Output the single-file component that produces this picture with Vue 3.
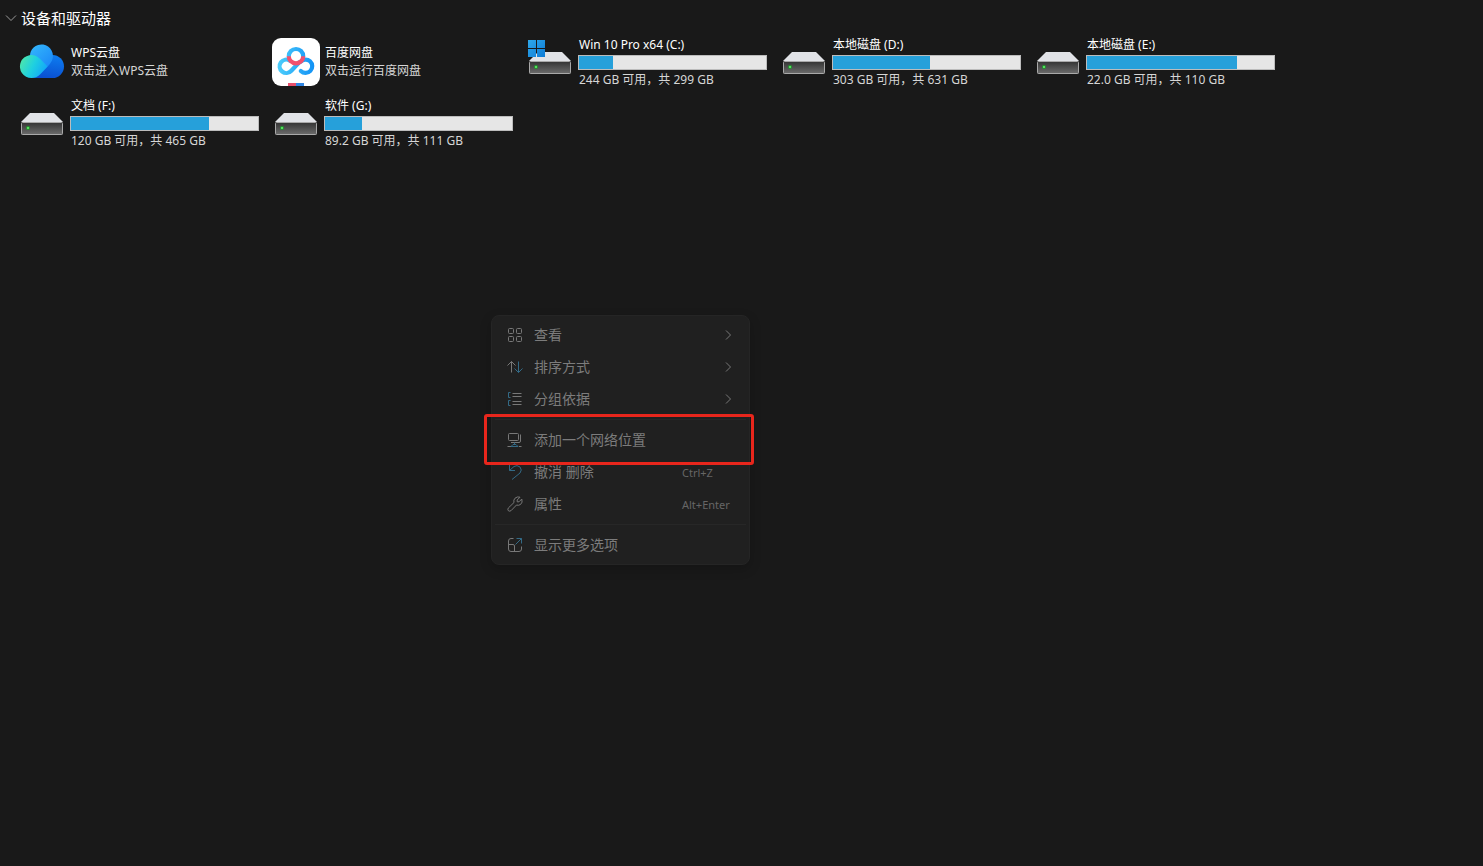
<template>
    <main class="explorer">
        <button class="group-title" type="button" :aria-expanded="expanded" @click="expanded = !expanded">
            <svg class="group-arrow" :class="{ closed: !expanded }" width="12" height="12" viewBox="0 0 12 12">
                <path d="M1 3.5 L6 8.5 L11 3.5" />
            </svg>
            <span>设备和驱动器</span>
        </button>
        <ul class="tiles" v-show="expanded">
            <li class="tile" v-for="item in items" :key="item.name">
                <svg v-if="item.type === 'wps'" class="tile-icon" viewBox="0 0 48 48">
                    <defs>
                        <linearGradient id="wpsTop" x1="0" y1="0" x2="1" y2="1">
                            <stop offset="0" stop-color="#35b9fb" />
                            <stop offset="1" stop-color="#1a86f8" />
                        </linearGradient>
                        <linearGradient id="wpsRight" x1="0.6" y1="0" x2="0.4" y2="1">
                            <stop offset="0" stop-color="#0d7cf0" />
                            <stop offset="1" stop-color="#0a4fd0" />
                        </linearGradient>
                        <linearGradient id="wpsLeft" x1="0" y1="0.2" x2="1" y2="0.6">
                            <stop offset="0" stop-color="#4fe8a8" />
                            <stop offset="0.5" stop-color="#1fd0e0" />
                            <stop offset="1" stop-color="#12a4fa" />
                        </linearGradient>
                    </defs>
                    <path d="M13.5 40 L25 24 L34.5 17 A11.5 11.5 0 0 1 34.5 40 Z" fill="url(#wpsRight)" />
                    <path d="M12 19 A11.5 11.5 0 1 1 34 22.500 Q32.500 25.500 29.700 28.500 L20 24 Z" fill="url(#wpsTop)" />
                    <path d="M21.600 20.400 A11.5 11.5 0 1 0 13.5 40 Q18.500 40 22 36.500 L29.700 28.500 Z" fill="url(#wpsLeft)" />
                </svg>
                <svg v-else-if="item.type === 'baidu'" class="tile-icon" viewBox="0 0 48 48">
                    <defs>
                        <linearGradient id="panLine" gradientUnits="userSpaceOnUse" x1="6" y1="0" x2="42" y2="0">
                            <stop offset="0" stop-color="#4ccdfb" />
                            <stop offset="1" stop-color="#1292f5" />
                        </linearGradient>
                    </defs>
                    <rect width="48" height="48" rx="9" fill="#fff" />
                    <g fill="none" stroke="url(#panLine)" stroke-width="4.2" stroke-linecap="round">
                        <path d="M27 24.500 L19.300 32.800 A6.700 6.700 0 1 1 18 22.700" />
                        <path d="M28.500 23.800 A6.700 6.700 0 1 1 28.800 33" />
                        <path d="M16.800 18.200 A7.200 7.200 0 0 1 31.200 18.200" />
                        <path d="M16.800 18.200 A7.200 7.200 0 0 0 31.200 18.200" stroke="#f2506e" stroke-linecap="butt" />
                    </g>
                    <rect x="16" y="45" width="8" height="3" fill="#e8506c" />
                    <rect x="24" y="45" width="8" height="3" fill="#2f86e4" />
                </svg>
                <svg v-else class="tile-icon" viewBox="0 0 48 48">
                    <defs>
                        <linearGradient id="driveBody" x1="0" y1="0" x2="0" y2="1">
                            <stop offset="0" stop-color="#343434" />
                            <stop offset="1" stop-color="#6c6c6c" />
                        </linearGradient>
                        <linearGradient id="winLogo" x1="0" y1="0" x2="1" y2="1">
                            <stop offset="0" stop-color="#2fa8ea" />
                            <stop offset="1" stop-color="#0c7bd6" />
                        </linearGradient>
                    </defs>
                    <path d="M12 14 H36 L45 23 H3 Z" fill="#e1e3e7" />
                    <rect x="3.5" y="23.5" width="41" height="12" rx="0.8" fill="url(#driveBody)" stroke="#a9a9a9" />
                    <circle cx="10" cy="29" r="2" fill="#1f9a2c" />
                    <circle cx="10" cy="29" r="1" fill="#6bf070" />
                    <path v-if="item.system" d="M2 2h8v8h-8z M11 2h8v8h-8z M2 11h8v8h-8z M11 11h8v8h-8z" fill="url(#winLogo)" />
                </svg>
                <div class="tile-info">
                    <div class="tile-name">{{ item.name }}</div>
                    <template v-if="item.total">
                        <div class="usage" role="progressbar" :aria-label="item.name" :aria-valuenow="getUsed(item)">
                            <div class="usage-fill" :style="{ width: getUsed(item) + '%' }"></div>
                        </div>
                        <div class="tile-desc">{{ item.free }} GB 可用，共 {{ item.total }} GB</div>
                    </template>
                    <div v-else class="tile-desc">{{ item.desc }}</div>
                </div>
            </li>
        </ul>

        <div class="context-menu" role="menu">
            <template v-for="entry in menu" :key="entry.label">
                <hr v-if="entry.divider" class="menu-divider">
                <button class="menu-item" :class="{ marked: entry.marked }" type="button" role="menuitem">
                    <svg class="menu-icon" width="16" height="16" viewBox="0 0 16 16">
                        <path v-for="(d, i) in entry.icon" :key="i" :d="d" />
                        <path v-for="(d, i) in entry.accent" :key="'a' + i" :d="d" class="accent" />
                    </svg>
                    <span class="menu-label">{{ entry.label }}</span>
                    <span v-if="entry.keys" class="menu-keys">{{ entry.keys }}</span>
                    <svg v-if="entry.sub" class="menu-arrow" width="12" height="12" viewBox="0 0 12 12">
                        <path d="M4 1.500 L8.500 6 L4 10.500" />
                    </svg>
                </button>
            </template>
        </div>
    </main>
</template>
<script setup>
    import { ref } from 'vue';
    const expanded = ref(true);
    const items = [
        { type: 'wps', name: 'WPS云盘', desc: '双击进入WPS云盘' },
        { type: 'baidu', name: '百度网盘', desc: '双击运行百度网盘' },
        { type: 'drive', name: 'Win 10 Pro x64 (C:)', free: '244', total: '299', system: true },
        { type: 'drive', name: '本地磁盘 (D:)', free: '303', total: '631' },
        { type: 'drive', name: '本地磁盘 (E:)', free: '22.0', total: '110' },
        { type: 'drive', name: '文档 (F:)', free: '120', total: '465' },
        { type: 'drive', name: '软件 (G:)', free: '89.2', total: '111' }
    ];
    const getUsed = (item) => {
        return Math.round((1 - item.free / item.total) * 100);
    };
    const menu = [
        {
            label: '查看',
            sub: true,
            icon: [
                'M2.500 1.500h3a1 1 0 0 1 1 1v3a1 1 0 0 1-1 1h-3a1 1 0 0 1-1-1v-3a1 1 0 0 1 1-1z',
                'M10.500 1.500h3a1 1 0 0 1 1 1v3a1 1 0 0 1-1 1h-3a1 1 0 0 1-1-1v-3a1 1 0 0 1 1-1z',
                'M2.500 9.500h3a1 1 0 0 1 1 1v3a1 1 0 0 1-1 1h-3a1 1 0 0 1-1-1v-3a1 1 0 0 1 1-1z',
                'M10.500 9.500h3a1 1 0 0 1 1 1v3a1 1 0 0 1-1 1h-3a1 1 0 0 1-1-1v-3a1 1 0 0 1 1-1z'
            ]
        },
        {
            label: '排序方式',
            sub: true,
            icon: ['M4.500 13.500V2.500 M0.500 6.500L4.500 2.500L8.500 6.500'],
            accent: ['M11.500 2.500V13.500 M7.500 9.500L11.500 13.500L15.500 9.500']
        },
        {
            label: '分组依据',
            sub: true,
            icon: ['M5.500 2.500H14.500 M5.500 5.500H14.500 M5.500 10.500H14.500 M5.500 13.500H14.500'],
            accent: ['M3.500 1.500H1.500V6.500H3.500 M3.500 9.500H1.500V14.500H3.500']
        },
        {
            label: '添加一个网络位置',
            divider: true,
            marked: true,
            icon: [
                'M2.500 1.500h8a1 1 0 0 1 1 1v5a1 1 0 0 1-1 1h-8a1 1 0 0 1-1-1v-5a1 1 0 0 1 1-1z',
                'M13.500 2.500V9a1.500 1.500 0 0 1-1.500 1.500H4 M0.500 14.500H4 M12 14.500H14.500'
            ],
            accent: ['M7.500 10.500V12.500 M4 14.500L6 12.500H9L11 14.500Z']
        },
        {
            label: '撤消 删除',
            keys: 'Ctrl+Z',
            accent: ['M2.500 1V6.500H8 M2.500 6.500L7 2.500Q10 0.500 13 3Q15.500 6 13 9L5 15.500']
        },
        {
            label: '属性',
            keys: 'Alt+Enter',
            icon: ['M13 1.200L10.200 4V5.800H12L14.800 3Q16 6.500 13.500 8.500Q11.500 9.800 9.500 9L4.200 14.500Q2.800 15.800 1.300 14.700Q0.200 13.200 1.500 11.800L7 6.500Q6.200 4 8 2.200Q10.300 0.200 13 1.200Z']
        },
        {
            label: '显示更多选项',
            divider: true,
            icon: ['M6.500 1.500H4A2.500 2.500 0 0 0 1.500 4V12A2.500 2.500 0 0 0 4 14.500H12A2.500 2.500 0 0 0 14.500 12V9.500 M1.500 7.500H6A1.500 1.500 0 0 1 7.500 9V14.500'],
            accent: ['M8.500 7.500L14.500 1.500 M9.500 1.500H14.500V6.500']
        }
    ];
</script>
<style>
    body{
        background-color: #191919;
    }
</style>
<style scoped>
    .explorer{
        position: relative;
        min-height: 100vh;
        color: #fff;
        font-family: "Noto Sans", "Noto Sans CJK SC", sans-serif;
        font-size: 12px;
    }
    button{
        border: none;
        background: none;
        font-family: inherit;
        text-align: left;
    }
    .group-title{
        display: flex;
        align-items: center;
        gap: 4px;
        height: 38px;
        padding: 0 5px 2px;
        color: #fff;
        font-size: 15px;
    }
    .group-title span{
        padding-bottom: 2px;
    }
    .group-arrow{
        fill: none;
        stroke: #9a9a9a;
    }
    .group-arrow.closed{
        transform: rotate(-90deg);
    }
    .tiles{
        display: grid;
        grid-template-columns: repeat(auto-fill, 254px);
        grid-auto-rows: 48px;
        row-gap: 13px;
        margin: 0;
        padding: 0 0 0 18px;
        list-style: none;
    }
    .tile{
        display: flex;
        align-items: center;
        gap: 4px;
    }
    .tile-icon{
        width: 48px;
        height: 48px;
    }
    .tile-info{
        width: 189px;
        white-space: nowrap;
    }
    .tile-name, .tile-desc{
        padding-left: 1px;
        line-height: 18px;
    }
    .tile-desc{
        color: #d6d6d6;
    }
    .usage{
        box-sizing: border-box;
        height: 15px;
        margin: 1px 0;
        border: 1px solid #bcbcbc;
        background-color: #e6e6e6;
    }
    .usage-fill{
        height: 100%;
        background-color: #26a0da;
    }
    .context-menu{
        position: absolute;
        top: 315px;
        left: 491px;
        box-sizing: border-box;
        width: 259px;
        padding: 3px;
        border: 1px solid #252525;
        border-radius: 8px;
        background-color: #202020;
        box-shadow: 0 4px 12px rgba(0, 0, 0, 0.2);
    }
    .menu-item{
        position: relative;
        display: flex;
        align-items: center;
        width: 100%;
        height: 32px;
        padding: 0 12px;
        color: #7c7c7c;
        font-size: 14px;
    }
    .menu-icon, .menu-arrow{
        fill: none;
        stroke: #787878;
    }
    .menu-icon .accent{
        stroke: #336a86;
    }
    .menu-label{
        flex: 1;
        padding: 0 0 2px 11px;
    }
    .menu-keys{
        width: 52px;
        color: #666;
        font-size: 11px;
        white-space: nowrap;
    }
    .menu-divider{
        height: 1px;
        margin: 4px 0;
        border: none;
        background-color: #272727;
    }
    .menu-item.marked{
        z-index: 1;
    }
    .menu-item.marked::after{
        content: "";
        position: absolute;
        inset: -10px -8px -9px -11px;
        border: 3px solid #e8261c;
        border-radius: 3px;
    }
</style>
